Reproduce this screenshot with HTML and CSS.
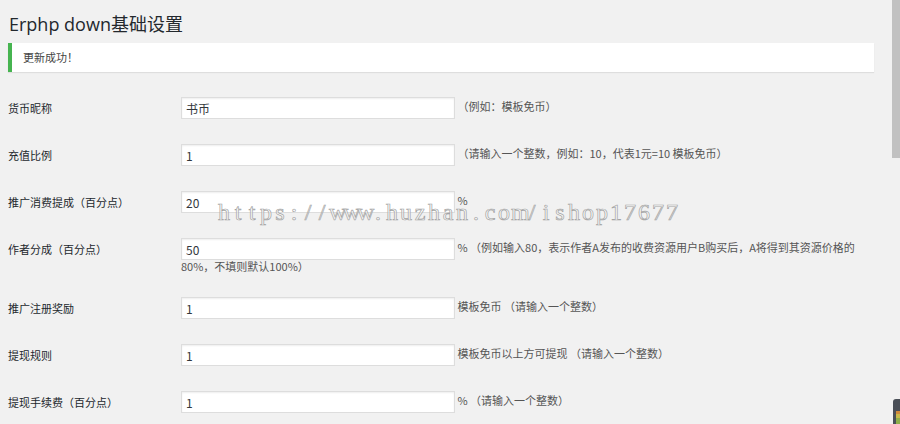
FILE: index.html
```html
<!DOCTYPE html>
<html lang="zh-CN">
<head>
<meta charset="utf-8">
<title>Erphp down基础设置</title>
<link rel="stylesheet" href="styles.css">
</head>
<body>
<div class="wrap">
  <h1 class="page-title">Erphp down基础设置</h1>
  <div class="notice"><p>更新成功！</p></div>
  <table class="form-table">
    <tr>
      <th>货币昵称</th>
      <td><input class="field" type="text" value="书币"> <span class="desc">（例如：模板免币）</span></td>
    </tr>
    <tr>
      <th>充值比例</th>
      <td><input class="field" type="text" value="1"> <span class="desc">（请输入一个整数，例如：10，代表1元=10 模板免币）</span></td>
    </tr>
    <tr>
      <th>推广消费提成（百分点）</th>
      <td><input class="field" type="text" value="20"> <span class="desc">%</span></td>
    </tr>
    <tr>
      <th>作者分成（百分点）</th>
      <td><input class="field" type="text" value="50"> <span class="desc">% （例如输入80，表示作者A发布的收费资源用户B购买后，A将得到其资源价格的80%，不填则默认100%）</span></td>
    </tr>
    <tr>
      <th>推广注册奖励</th>
      <td><input class="field" type="text" value="1"> <span class="desc">模板免币 （请输入一个整数）</span></td>
    </tr>
    <tr>
      <th>提现规则</th>
      <td><input class="field" type="text" value="1"> <span class="desc">模板免币以上方可提现 （请输入一个整数）</span></td>
    </tr>
    <tr>
      <th>提现手续费（百分点）</th>
      <td><input class="field" type="text" value="1"> <span class="desc">% （请输入一个整数）</span></td>
    </tr>
  </table>
</div>
<div class="watermark"><span>h</span><span>t</span><span>t</span><span>p</span><span>s</span><span>:</span><span>/</span><span>/</span><span>w</span><span>w</span><span>w</span><span>.</span><span>h</span><span>u</span><span>z</span><span>h</span><span>a</span><span>n</span><span>.</span><span>c</span><span>o</span><span>m</span><span>/</span><span>i</span><span>s</span><span>h</span><span>o</span><span>p</span><span>1</span><span>7</span><span>6</span><span>7</span><span>7</span></div>
<div class="scroll-thumb"></div>
<div class="corner-widget"></div>
</body>
</html>
```

FILE: styles.css
```css
html, body {
  margin: 0;
  padding: 0;
}
body {
  background: #f1f1f1;
  overflow: hidden;
  font-family: "Noto Sans CJK SC", "Noto Sans", sans-serif;
  font-size: 11px;
  color: #23282d;
  width: 900px;
  height: 424px;
  position: relative;
}
.wrap {
  padding: 0 0 0 8px;
  width: 866px;
}
.page-title {
  margin: 0;
  padding: 12px 0 0 1px;
  font-family: "Open Sans", "Noto Sans CJK SC", sans-serif;
  font-size: 18px;
  line-height: 24px;
  font-weight: 400;
  color: #23282d;
}
.notice {
  margin-top: 7px;
  background: #fff;
  border-left: 4px solid #46b450;
  box-shadow: 0 1px 1px rgba(0, 0, 0, 0.08);
}
.notice p {
  margin: 0;
  padding: 7px 11px;
  line-height: 15px;
  font-size: 11px;
  color: #444;
}
.form-table {
  margin-top: 13px;
  border-collapse: collapse;
  border-spacing: 0;
  width: 866px;
}
.form-table th {
  width: 173px;
  padding: 16px 0 13px 0;
  text-align: left;
  vertical-align: top;
  font-weight: 400;
  line-height: 14px;
  color: #23282d;
}
.form-table td {
  padding: 12px 10px 13px 0;
  line-height: 12px;
  vertical-align: top;
}
.field {
  box-sizing: border-box;
  width: 274px;
  height: 22px;
  margin: 0;
  padding: 0 4px;
  border: 1px solid #ddd;
  box-shadow: inset 0 1px 2px rgba(0, 0, 0, 0.07);
  background: #fff;
  font-family: "Noto Sans CJK SC", "Noto Sans", sans-serif;
  font-size: 12px;
  color: #32373c;
  vertical-align: middle;
  outline: none;
}
.desc {
  color: #555;
}
.watermark {
  position: absolute;
  left: 217px;
  top: 201px;
  display: flex;
  font-family: "Liberation Serif", serif;
  font-size: 24px;
  line-height: 22px;
  color: rgba(255, 255, 255, 0.55);
  -webkit-text-stroke: 0.7px #a3a3a3;
  white-space: nowrap;
  pointer-events: none;
}
.watermark span {
  width: 14px;
  text-align: center;
}
.scroll-thumb {
  position: absolute;
  right: 0;
  top: 0;
  width: 8px;
  height: 158px;
  background: #c1c1c1;
}
.corner-widget {
  position: absolute;
  left: 893px;
  top: 399px;
  width: 7px;
  height: 25px;
  border-radius: 3px 0 0 0;
  background:
    linear-gradient(to bottom, transparent 0, transparent 12px, #d08a3a 12px, #d08a3a 15px, #c9b94a 15px, #c9b94a 19px, #8fae4a 19px) 3px 0 / 4px 25px no-repeat,
    #4a4f57;
}
```
